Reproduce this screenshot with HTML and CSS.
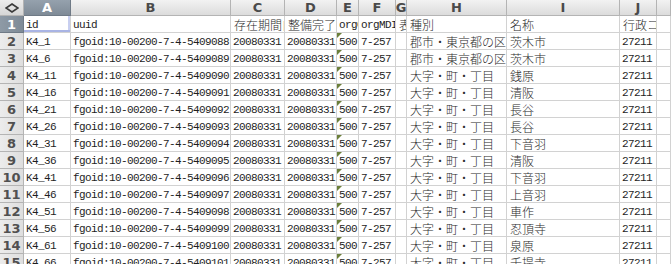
FILE: index.html
```
<!DOCTYPE html>
<html lang="ja">
<head>
  <meta charset="UTF-8">
  <title>Sheet</title>
  <link rel="stylesheet" href="styles.css">
</head>
<body>
  <div class="sheet" id="sheet">
    <div class="corner">
      <svg viewBox="0 0 14 10" width="14" height="10">
        <path d="M7 1 L13 5 L7 9 L1 5 Z" fill="none" stroke="#3a3a3a" stroke-width="1.6"/>
      </svg>
    </div>
  </div>

  <script>
    const letters = ['A', 'B', 'C', 'D', 'E', 'F', 'G', 'H', 'I', 'J', ''];
    const rows = [
      ['id', 'uuid', '存在期間自', '整備完了日', 'orgGILvl', 'orgMDId', '表示区分', '種別', '名称', '行政コード'],
      ['K4_1', '9088', '郡市・東京都の区', '茨木市'],
      ['K4_6', '9089', '郡市・東京都の区', '茨木市'],
      ['K4_11', '9090', '大字・町・丁目', '銭原'],
      ['K4_16', '9091', '大字・町・丁目', '清阪'],
      ['K4_21', '9092', '大字・町・丁目', '長谷'],
      ['K4_26', '9093', '大字・町・丁目', '長谷'],
      ['K4_31', '9094', '大字・町・丁目', '下音羽'],
      ['K4_36', '9095', '大字・町・丁目', '清阪'],
      ['K4_41', '9096', '大字・町・丁目', '下音羽'],
      ['K4_46', '9097', '大字・町・丁目', '上音羽'],
      ['K4_51', '9098', '大字・町・丁目', '車作'],
      ['K4_56', '9099', '大字・町・丁目', '忍頂寺'],
      ['K4_61', '9100', '大字・町・丁目', '泉原'],
      ['K4_66', '9101', '大字・町・丁目', '千提寺']
    ];
    const jpCols = [2, 3, 6, 7, 8, 9];
    const sheet = document.getElementById('sheet');

    function cell(cls, text) {
      const div = document.createElement('div');
      div.className = cls;
      div.textContent = text;
      sheet.appendChild(div);
      return div;
    }

    letters.forEach((l, i) => {
      cell('col-head' + (i === 0 ? ' selected' : ''), l);
    });

    rows.forEach((r, n) => {
      cell('row-head' + (n === 0 ? ' selected' : ''), n + 1);
      let values = r;
      if (n > 0) {
        values = [r[0], 'fgoid:10-00200-7-4-540' + r[1], '20080331', '20080331', '500', '7-257', '', r[2], r[3], '27211'];
      }
      values.forEach((v, i) => {
        let cls = 'cell';
        if (n === 0 ? jpCols.includes(i) : (i === 7 || i === 8)) cls += ' jp';
        if (n > 0 && i === 4) cls += ' flag';
        if (n === 0 && i === 0) cls += ' active';
        cell(cls, v);
      });
      cell('cell', '');
    });
  </script>
</body>
</html>
```

FILE: styles.css
```
body {
  margin: 0;
  background: #fff;
  overflow: hidden;
}

.sheet {
  display: grid;
  grid-template-columns: 24px 47px 160px 54px 52px 22px 37px 11px 100px 113px 37px 1fr;
  grid-template-rows: 16px;
  grid-auto-rows: 17px;
  width: 671px;
  font-family: "Liberation Mono", monospace;
  font-size: 11px;
  letter-spacing: -0.6px;
  color: #1e1e1e;
}

.corner,
.col-head,
.row-head {
  background: linear-gradient(#f2f2f2, #dcdcdc);
  border-right: 1px solid #b4b4b4;
  border-bottom: 1px solid #b4b4b4;
  display: flex;
  align-items: center;
  justify-content: center;
  font-family: "DejaVu Sans", sans-serif;
  font-weight: bold;
  font-size: 13px;
  letter-spacing: 0;
  color: #4a4a4a;
  box-sizing: border-box;
}

.corner {
  background: linear-gradient(#ececec, #d6d6d6);
}

.row-head {
  background: linear-gradient(90deg, #ececec, #dedede);
  font-size: 13px;
  color: #505050;
}

.selected {
  background: linear-gradient(#95a1ad, #7f8b97);
  color: #fff;
  border-color: #6f7a86;
}

.row-head.selected {
  background: linear-gradient(90deg, #8e9aa6, #7e8a96);
  color: #fff;
}

.cell {
  border-right: 1px solid #d2d2d2;
  border-bottom: 1px solid #d2d2d2;
  box-sizing: border-box;
  padding: 1px 0 0 2px;
  line-height: 16px;
  white-space: nowrap;
  overflow: hidden;
  position: relative;
}

.jp {
  font-family: "Noto Sans CJK JP", sans-serif;
  font-size: 12px;
  font-weight: 300;
  letter-spacing: 0;
  color: #2a2a2a;
  padding-left: 3px;
}

.active {
  box-shadow: inset 0 -2px 0 #a9b4e4, inset -2px 0 0 #c8cff0;
}

.flag::before {
  content: "";
  position: absolute;
  left: 0;
  top: 0;
  border-top: 5px solid #6b7f3a;
  border-right: 5px solid transparent;
}
```
